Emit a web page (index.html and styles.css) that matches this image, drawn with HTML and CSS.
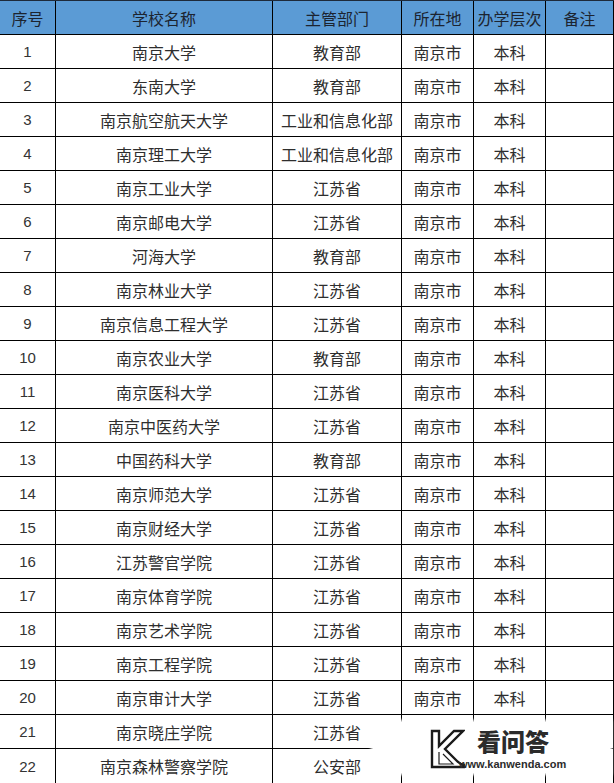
FILE: index.html
```html
<!DOCTYPE html>
<html lang="zh">
<head>
<meta charset="utf-8">
<link rel="stylesheet" href="styles.css">
</head>
<body>
<div class="sheet">
  <div class="row head">
    <div class="c">序号</div><div class="c">学校名称</div><div class="c">主管部门</div><div class="c">所在地</div><div class="c">办学层次</div><div class="c">备注</div>
  </div>
  <div class="row"><div class="c num">1</div><div class="c">南京大学</div><div class="c">教育部</div><div class="c">南京市</div><div class="c">本科</div><div class="c"></div></div>
  <div class="row"><div class="c num">2</div><div class="c">东南大学</div><div class="c">教育部</div><div class="c">南京市</div><div class="c">本科</div><div class="c"></div></div>
  <div class="row"><div class="c num">3</div><div class="c">南京航空航天大学</div><div class="c">工业和信息化部</div><div class="c">南京市</div><div class="c">本科</div><div class="c"></div></div>
  <div class="row"><div class="c num">4</div><div class="c">南京理工大学</div><div class="c">工业和信息化部</div><div class="c">南京市</div><div class="c">本科</div><div class="c"></div></div>
  <div class="row"><div class="c num">5</div><div class="c">南京工业大学</div><div class="c">江苏省</div><div class="c">南京市</div><div class="c">本科</div><div class="c"></div></div>
  <div class="row"><div class="c num">6</div><div class="c">南京邮电大学</div><div class="c">江苏省</div><div class="c">南京市</div><div class="c">本科</div><div class="c"></div></div>
  <div class="row"><div class="c num">7</div><div class="c">河海大学</div><div class="c">教育部</div><div class="c">南京市</div><div class="c">本科</div><div class="c"></div></div>
  <div class="row"><div class="c num">8</div><div class="c">南京林业大学</div><div class="c">江苏省</div><div class="c">南京市</div><div class="c">本科</div><div class="c"></div></div>
  <div class="row"><div class="c num">9</div><div class="c">南京信息工程大学</div><div class="c">江苏省</div><div class="c">南京市</div><div class="c">本科</div><div class="c"></div></div>
  <div class="row"><div class="c num">10</div><div class="c">南京农业大学</div><div class="c">教育部</div><div class="c">南京市</div><div class="c">本科</div><div class="c"></div></div>
  <div class="row"><div class="c num">11</div><div class="c">南京医科大学</div><div class="c">江苏省</div><div class="c">南京市</div><div class="c">本科</div><div class="c"></div></div>
  <div class="row"><div class="c num">12</div><div class="c">南京中医药大学</div><div class="c">江苏省</div><div class="c">南京市</div><div class="c">本科</div><div class="c"></div></div>
  <div class="row"><div class="c num">13</div><div class="c">中国药科大学</div><div class="c">教育部</div><div class="c">南京市</div><div class="c">本科</div><div class="c"></div></div>
  <div class="row"><div class="c num">14</div><div class="c">南京师范大学</div><div class="c">江苏省</div><div class="c">南京市</div><div class="c">本科</div><div class="c"></div></div>
  <div class="row"><div class="c num">15</div><div class="c">南京财经大学</div><div class="c">江苏省</div><div class="c">南京市</div><div class="c">本科</div><div class="c"></div></div>
  <div class="row"><div class="c num">16</div><div class="c">江苏警官学院</div><div class="c">江苏省</div><div class="c">南京市</div><div class="c">本科</div><div class="c"></div></div>
  <div class="row"><div class="c num">17</div><div class="c">南京体育学院</div><div class="c">江苏省</div><div class="c">南京市</div><div class="c">本科</div><div class="c"></div></div>
  <div class="row"><div class="c num">18</div><div class="c">南京艺术学院</div><div class="c">江苏省</div><div class="c">南京市</div><div class="c">本科</div><div class="c"></div></div>
  <div class="row"><div class="c num">19</div><div class="c">南京工程学院</div><div class="c">江苏省</div><div class="c">南京市</div><div class="c">本科</div><div class="c"></div></div>
  <div class="row"><div class="c num">20</div><div class="c">南京审计大学</div><div class="c">江苏省</div><div class="c">南京市</div><div class="c">本科</div><div class="c"></div></div>
  <div class="row"><div class="c num">21</div><div class="c">南京晓庄学院</div><div class="c">江苏省</div><div class="c"></div><div class="c"></div><div class="c"></div></div>
  <div class="row last"><div class="c num">22</div><div class="c">南京森林警察学院</div><div class="c">公安部</div><div class="c"></div><div class="c"></div><div class="c"></div></div>

  <div class="watermark">
    <svg class="wm-logo" width="36" height="42" viewBox="0 0 36 42">
      <path d="M3 3 H10 V18 L25 3 H34 L16 21 L28 33 Q31 36 35 37 V39 H3 Z" fill="#fff" stroke="#1a1a1a" stroke-width="2.4" stroke-linejoin="miter"/>
      <path d="M10 24 L10 36 L24 36 L14 26" fill="none" stroke="#1a1a1a" stroke-width="1.2"/>
    </svg>
    <div class="wm-text">
      <div class="wm-cn">看问答</div>
      <div class="wm-url">www.kanwenda.com</div>
    </div>
  </div>
</div>
</body>
</html>
```
FILE: styles.css
```css
html, body {
  margin: 0;
  padding: 0;
  background: #fff;
}
body {
  font-family: "Noto Sans CJK SC", "Liberation Sans", sans-serif;
  font-size: 16px;
  color: #2e2e2e;
}
.sheet {
  position: relative;
  width: 614px;
  height: 783px;
  overflow: hidden;
}
.row {
  display: grid;
  grid-template-columns: 56px 217px 129px 72px 72px 68px;
  height: 34px;
  border-bottom: 1px solid #000;
  box-sizing: border-box;
}
.row.head {
  height: 35px;
  border-top: 1px solid #1e2a3a;
  background: #5b9bd5;
  color: #1c2430;
}
.row.last {
  border-bottom: none;
}
.c {
  border-right: 1px solid #000;
  box-sizing: border-box;
  display: flex;
  align-items: center;
  justify-content: center;
  line-height: 1;
  white-space: nowrap;
}
.num {
  font-family: "Liberation Sans", "DejaVu Sans", sans-serif;
  font-size: 15px;
  color: #333;
}
.watermark {
  position: absolute;
  left: 373px;
  top: 722px;
  width: 237px;
  height: 51px;
  background: #fff;
  box-shadow: 0 0 3px 2px #fff;
  display: flex;
  align-items: flex-start;
}
.wm-logo {
  margin-left: 56px;
  margin-top: 6px;
  flex: none;
}
.wm-text {
  margin-left: 12px;
  margin-top: 9px;
  display: flex;
  flex-direction: column;
}
.wm-cn {
  font-family: "Liberation Sans", "Noto Sans CJK SC", sans-serif;
  font-weight: 900;
  font-size: 24px;
  line-height: 24px;
  height: 24px;
  color: #2b2b2b;
}
.wm-url {
  font-family: "Liberation Sans", "DejaVu Sans", sans-serif;
  font-weight: 700;
  font-size: 11px;
  line-height: 11px;
  color: #2b2b2b;
  margin-left: -18px;
  margin-top: 4px;
}
```
